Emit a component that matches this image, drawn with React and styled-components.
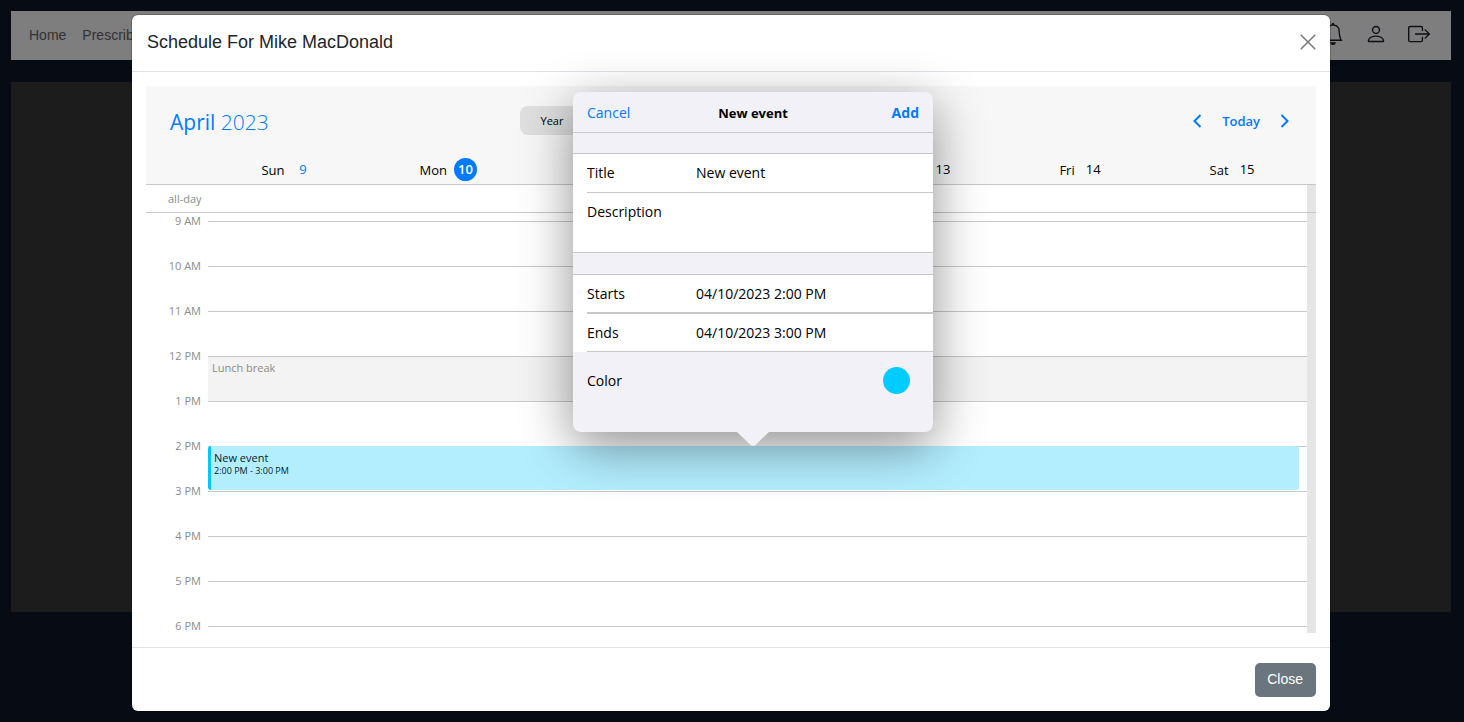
import React from "react";
import styled, { createGlobalStyle } from "styled-components";
import { BsBell, BsPerson, BsBoxArrowRight } from "react-icons/bs";

const GlobalStyle = createGlobalStyle`
  * { box-sizing: border-box; }
  body {
    margin: 0;
    background: #0c1628;
    font-family: "Liberation Sans", Arial, sans-serif;
    font-size: 14px;
    color: #212529;
  }
  button, input, textarea {
    font: inherit;
    color: inherit;
    border: 0;
    padding: 0;
    margin: 0;
    background: none;
    outline: 0;
  }
  button { cursor: pointer; }
`;

const Page = styled.div`
  min-height: 100vh;
  padding: 11px 13px 11px 11px;
`;

const NavBar = styled.nav`
  display: flex;
  align-items: center;
  justify-content: space-between;
  height: 49px;
  padding: 0 21px 3px 18px;
  background: #fcfcfc;
`;

const NavGroup = styled.div`
  display: flex;
  align-items: center;
  gap: ${(p) => p.$gap}px;
`;

const NavLink = styled.a`
  padding-top: 2px;
  color: #666;
  text-decoration: none;
  line-height: 20px;
`;

const IconButton = styled.button`
  display: flex;
  color: #1c1c28;
  svg { width: 22px; height: 22px; }
`;

const Panel = styled.main`
  height: 530px;
  margin-top: 22px;
  background: #383838;
`;

const Backdrop = styled.div`
  position: absolute;
  inset: 0;
  padding: 15px 2px 11px 0;
  background: rgba(0, 0, 0, 0.5);
`;

const Modal = styled.section`
  width: calc(100% - 28px);
  max-width: 1198px;
  margin: 0 auto;
  border-radius: 6px;
  background: #fff;
  box-shadow: 0 0 0 1px rgba(0, 0, 0, 0.18);
`;

const ModalHeader = styled.header`
  display: flex;
  align-items: center;
  justify-content: space-between;
  height: 57px;
  padding: 0 14px 2px 15px;
  border-bottom: 1px solid #dee2e6;
`;

const ModalTitle = styled.h5`
  margin: 0;
  font-size: 18px;
  line-height: 26px;
  font-weight: 400;
`;

const CloseIcon = styled.button`
  display: flex;
  color: #7c7c7c;
`;

const ModalBody = styled.div`
  padding: 14px;
`;

const ModalFooter = styled.footer`
  display: flex;
  justify-content: flex-end;
  padding: 15px 14px 14px;
  border-top: 1px solid #dee2e6;
`;

const CloseButton = styled.button`
  height: 34px;
  padding: 0 13px 2px 12px;
  border-radius: 5px;
  background: #6a757d;
  color: #fff;
`;

const Calendar = styled.div`
  font-family: "Open Sans", "Noto Sans", sans-serif;
  color: #000;
`;

const CalendarHead = styled.div`
  height: 99px;
  padding-top: 20px;
  background: #f7f7f7;
  border-bottom: 1px solid #c8c8c8;
`;

const Toolbar = styled.div`
  display: grid;
  grid-template-columns: 1fr auto 1fr;
  align-items: start;
  padding: 0 26px 0 24px;
`;

const MonthButton = styled.button`
  justify-self: start;
  font-size: 21px;
  line-height: 32px;
  color: #007aff;
`;

const Light = styled.span`
  font-weight: 300;
`;

const Segmented = styled.div`
  display: flex;
  width: 400px;
  height: 29px;
  margin-right: 20px;
  border-radius: 8px;
  background: #dfdfdf;
`;

const Segment = styled.button`
  width: 64px;
  font-size: 11px;
`;

const DateNav = styled.div`
  display: flex;
  align-items: center;
  justify-self: end;
  gap: 20px;
  height: 30px;
  color: #007aff;
`;

const ArrowButton = styled.button`
  display: flex;
`;

const TodayButton = styled.button`
  font-size: 13px;
  font-weight: 600;
`;

const WeekDays = styled.div`
  display: flex;
  margin: 20px 5px 0 63px;
`;

const WeekDay = styled.div`
  display: flex;
  flex: 1 1 auto;
  align-items: center;
  justify-content: center;
  gap: 7px;
  font-size: 13px;
`;

const DayNumber = styled.span`
  width: 23px;
  height: 23px;
  border-radius: 50%;
  line-height: 23px;
  text-align: center;
  font-weight: ${(p) => (p.$selected ? 600 : 400)};
  background: ${(p) => (p.$selected ? "#007aff" : "transparent")};
  color: ${(p) => (p.$selected ? "#fff" : p.$accent ? "#007aff" : "#000")};
`;

const AllDay = styled.div`
  height: 28px;
  padding-left: 22px;
  border-bottom: 1px solid #c8c8c8;
  font-size: 11px;
  line-height: 28px;
  color: #8b8b8b;
  background: linear-gradient(#e5e5e5, #e5e5e5) right / 9px 100% no-repeat;
`;

const Hours = styled.div`
  height: 420px;
  padding: 8px 9px 0 0;
  background: linear-gradient(#e5e5e5, #e5e5e5) right / 9px 100% no-repeat;
`;

const HourRow = styled.div`
  display: grid;
  grid-template-columns: 55px 1fr;
  gap: 7px;
  height: 45px;
  &:last-child { height: 7px; }
`;

const HourLabel = styled.span`
  height: 16px;
  margin-top: -8px;
  font-size: 11px;
  line-height: 16px;
  text-align: right;
  color: #8b8b8b;
`;

const Slot = styled.div`
  position: relative;
  padding: 3px 4px;
  border-top: 1px solid #c8c8c8;
  background: ${(p) => (p.$blocked ? "#f3f3f3" : "transparent")};
  font-size: 11px;
  line-height: 16px;
  color: #8b8b8b;
`;

const EventCard = styled.div`
  position: absolute;
  inset: -1px 8px 1px 0;
  padding: 5px 3px;
  border-left: 3px solid #00c8ff;
  border-radius: 3px;
  background: #b3eeff;
  color: #06222b;
`;

const EventTitle = styled.div`
  font-size: 11px;
  line-height: 14px;
`;

const EventTime = styled.div`
  font-size: 9px;
  line-height: 12px;
`;

const Popover = styled.form`
  position: absolute;
  z-index: 2;
  bottom: calc(100% + 14px);
  left: calc(50% - 182px);
  width: 360px;
  height: 340px;
  border-radius: 8px;
  background: #f2f1f7;
  box-shadow: 0 14px 52px rgba(0, 0, 0, 0.44);
  color: #000;
  font-size: 14px;
  line-height: 20px;
  &::after {
    content: "";
    position: absolute;
    top: 100%;
    left: 164px;
    width: 32px;
    height: 14px;
    background: #f2f1f7;
    clip-path: polygon(0 0, 100% 0, 60% 88%, 54% 98%, 46% 98%, 40% 88%);
  }
`;

const PopoverHead = styled.div`
  display: grid;
  grid-template-columns: 1fr auto 1fr;
  align-items: center;
  height: 41px;
  padding: 2px 14px 0;
  border-bottom: 1px solid #c8c8c8;
`;

const PopoverTitle = styled.strong`
  font-size: 13px;
  font-weight: 700;
`;

const LinkButton = styled.button`
  justify-self: ${(p) => (p.$primary ? "end" : "start")};
  font-weight: ${(p) => (p.$primary ? 700 : 400)};
  color: #007aff;
`;

const FieldGroup = styled.div`
  margin-top: ${(p) => p.$gap}px;
  padding-left: 14px;
  background: #fff;
  border-top: 1px solid #c8c8c8;
  border-bottom: ${(p) => (p.$open ? "0" : "1px solid #c8c8c8")};
`;

const Field = styled.div`
  display: grid;
  grid-template-columns: 109px 1fr;
  height: ${(p) => p.$height}px;
  padding-top: 9px;
  border-bottom: ${(p) => p.$line}px solid #c8c8c8;
`;

const TextInput = styled.input`
  width: 100%;
  height: 20px;
`;

const TextArea = styled.textarea`
  height: 44px;
  resize: none;
`;

const ColorRow = styled.div`
  display: flex;
  align-items: center;
  justify-content: space-between;
  height: 57px;
  padding: 0 23px 0 14px;
`;

const Swatch = styled.button`
  width: 27px;
  height: 27px;
  border-radius: 50%;
  background: #00ccff;
`;

const days = [
  ["Sun", 9], ["Mon", 10], ["Tue", 11], ["Wed", 12], ["Thu", 13], ["Fri", 14], ["Sat", 15],
];

const hours = ["9 AM", "10 AM", "11 AM", "12 PM", "1 PM", "2 PM", "3 PM", "4 PM", "5 PM", "6 PM"];

function Chevron({ d }) {
  return (
    <svg width="10" height="16" viewBox="0 0 10 16" fill="none" stroke="currentColor" strokeWidth="2">
      <path d={d} />
    </svg>
  );
}

function NewEventPopover() {
  return (
    <Popover onSubmit={(e) => e.preventDefault()}>
      <PopoverHead>
        <LinkButton type="button">Cancel</LinkButton>
        <PopoverTitle>New event</PopoverTitle>
        <LinkButton type="submit" $primary>Add</LinkButton>
      </PopoverHead>
      <FieldGroup $gap={20}>
        <Field $height={39} $line={1}>
          <label htmlFor="title">Title</label>
          <TextInput id="title" defaultValue="New event" />
        </Field>
        <Field $height={59} $line={0}>
          <label htmlFor="description">Description</label>
          <TextArea id="description" />
        </Field>
      </FieldGroup>
      <FieldGroup $gap={21} $open>
        <Field $height={39} $line={2}>
          <label htmlFor="starts">Starts</label>
          <TextInput id="starts" defaultValue="04/10/2023 2:00 PM" />
        </Field>
        <Field $height={38} $line={1}>
          <label htmlFor="ends">Ends</label>
          <TextInput id="ends" defaultValue="04/10/2023 3:00 PM" />
        </Field>
      </FieldGroup>
      <ColorRow>
        <label htmlFor="color">Color</label>
        <Swatch id="color" type="button" />
      </ColorRow>
    </Popover>
  );
}

function Scheduler() {
  return (
    <Calendar>
      <CalendarHead>
        <Toolbar>
          <MonthButton>April <Light>2023</Light></MonthButton>
          <Segmented>
            <Segment>Year</Segment>
            <Segment>Month</Segment>
            <Segment>Week</Segment>
            <Segment>Day</Segment>
          </Segmented>
          <DateNav>
            <ArrowButton aria-label="Previous"><Chevron d="M8.5 2L2.5 8L8.5 14" /></ArrowButton>
            <TodayButton>Today</TodayButton>
            <ArrowButton aria-label="Next"><Chevron d="M1.5 2L7.5 8L1.5 14" /></ArrowButton>
          </DateNav>
        </Toolbar>
        <WeekDays>
          {days.map(([name, n]) => (
            <WeekDay key={name}>
              {name}
              <DayNumber $accent={n === 9} $selected={n === 10}>{n}</DayNumber>
            </WeekDay>
          ))}
        </WeekDays>
      </CalendarHead>
      <AllDay>all-day</AllDay>
      <Hours>
        {hours.map((h) => (
          <HourRow key={h}>
            <HourLabel>{h}</HourLabel>
            <Slot $blocked={h === "12 PM"}>
              {h === "12 PM" && "Lunch break"}
              {h === "2 PM" && (
                <EventCard>
                  <EventTitle>New event</EventTitle>
                  <EventTime>2:00 PM - 3:00 PM</EventTime>
                  <NewEventPopover />
                </EventCard>
              )}
            </Slot>
          </HourRow>
        ))}
      </Hours>
    </Calendar>
  );
}

export default function App() {
  return (
    <>
      <GlobalStyle />
      <Page>
        <NavBar>
          <NavGroup $gap={16}>
            <NavLink href="#home">Home</NavLink>
            <NavLink href="#prescribe">Prescribe</NavLink>
          </NavGroup>
          <NavGroup $gap={21}>
            <IconButton aria-label="Notifications"><BsBell /></IconButton>
            <IconButton aria-label="Profile"><BsPerson /></IconButton>
            <IconButton aria-label="Log out"><BsBoxArrowRight /></IconButton>
          </NavGroup>
        </NavBar>
        <Panel />
      </Page>
      <Backdrop>
        <Modal role="dialog" aria-labelledby="modal-title">
          <ModalHeader>
            <ModalTitle id="modal-title">Schedule For Mike MacDonald</ModalTitle>
            <CloseIcon aria-label="Close">
              <svg width="16" height="16" viewBox="0 0 16 16" fill="none" stroke="currentColor" strokeWidth="1.6" strokeLinecap="round">
                <path d="M1.2 1.2L14.8 14.8M14.8 1.2L1.2 14.8" />
              </svg>
            </CloseIcon>
          </ModalHeader>
          <ModalBody>
            <Scheduler />
          </ModalBody>
          <ModalFooter>
            <CloseButton>Close</CloseButton>
          </ModalFooter>
        </Modal>
      </Backdrop>
    </>
  );
}
